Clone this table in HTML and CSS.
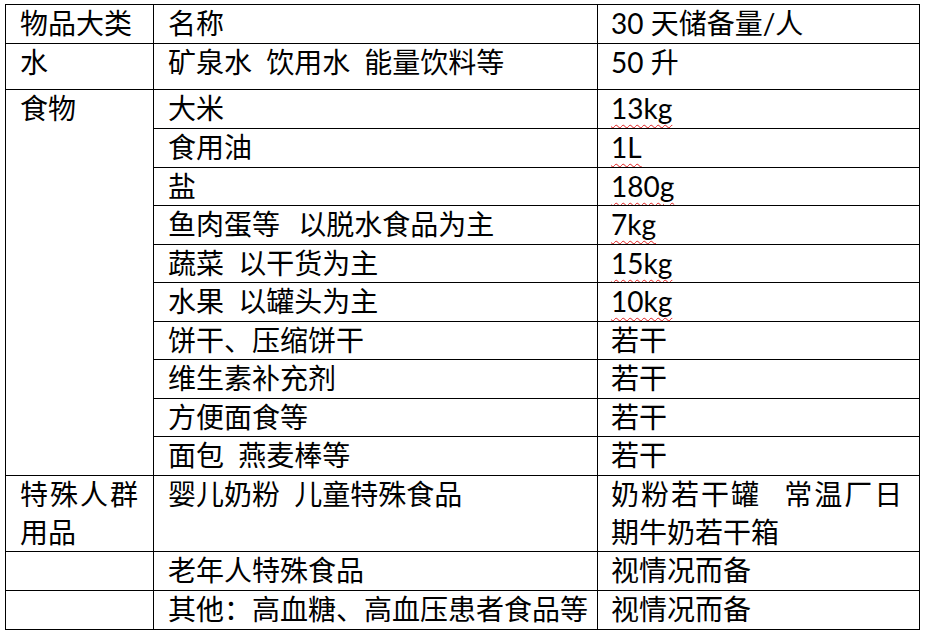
FILE: index.html
```html
<!DOCTYPE html>
<html lang="zh-CN">
<head>
<meta charset="utf-8">
<title>30天储备量</title>
<link rel="stylesheet" href="styles.css">
</head>
<body>
<div class="page">
<table class="grid">
  <colgroup>
    <col class="c1">
    <col class="c2">
    <col class="c3">
  </colgroup>
  <tr class="h39">
    <td><div class="t">物品大类</div></td>
    <td><div class="t">名称</div></td>
    <td class="num"><div class="t">30 天储备量/人</div></td>
  </tr>
  <tr class="h46">
    <td><div class="t">水</div></td>
    <td><div class="t ws">矿泉水 饮用水 能量饮料等</div></td>
    <td class="num"><div class="t">50 升</div></td>
  </tr>
  <tr class="h39">
    <td rowspan="10"><div class="t">食物</div></td>
    <td><div class="t">大米</div></td>
    <td class="num"><div class="t"><span class="sq">13kg</span></div></td>
  </tr>
  <tr class="hf">
    <td><div class="t">食用油</div></td>
    <td class="num"><div class="t"><span class="sq">1L</span></div></td>
  </tr>
  <tr class="hf">
    <td><div class="t">盐</div></td>
    <td class="num"><div class="t"><span class="sq">180g</span></div></td>
  </tr>
  <tr class="hf">
    <td><div class="t wl">鱼肉蛋等 以脱水食品为主</div></td>
    <td class="num"><div class="t"><span class="sq">7kg</span></div></td>
  </tr>
  <tr class="hf">
    <td><div class="t ws">蔬菜 以干货为主</div></td>
    <td class="num"><div class="t"><span class="sq">15kg</span></div></td>
  </tr>
  <tr class="hf">
    <td><div class="t ws">水果 以罐头为主</div></td>
    <td class="num"><div class="t"><span class="sq">10kg</span></div></td>
  </tr>
  <tr class="hf">
    <td><div class="t">饼干、压缩饼干</div></td>
    <td class="num"><div class="t">若干</div></td>
  </tr>
  <tr class="hf">
    <td><div class="t">维生素补充剂</div></td>
    <td class="num"><div class="t">若干</div></td>
  </tr>
  <tr class="hf">
    <td><div class="t">方便面食等</div></td>
    <td class="num"><div class="t">若干</div></td>
  </tr>
  <tr class="hf">
    <td><div class="t ws">面包 燕麦棒等</div></td>
    <td class="num"><div class="t">若干</div></td>
  </tr>
  <tr class="h76">
    <td><div class="t"><span class="just">特殊人群</span><br>用品</div></td>
    <td><div class="t ws">婴儿奶粉 儿童特殊食品</div></td>
    <td class="num"><div class="t wx"><span class="just">奶粉若干罐 常温厂日</span><br>期牛奶若干箱</div></td>
  </tr>
  <tr class="h39">
    <td></td>
    <td><div class="t">老年人特殊食品</div></td>
    <td class="num"><div class="t">视情况而备</div></td>
  </tr>
  <tr class="h39">
    <td></td>
    <td><div class="t">其他：高血糖、高血压患者食品等</div></td>
    <td class="num"><div class="t">视情况而备</div></td>
  </tr>
</table>
</div>
</body>
</html>
```
FILE: styles.css
```css
html, body {
  margin: 0;
  padding: 0;
  background: #ffffff;
}

.page {
  padding: 4px 0 0 5px;
}

.grid {
  border-collapse: collapse;
  table-layout: fixed;
  width: 914px;
  font-family: "Lato", "Noto Sans CJK SC", sans-serif;
  font-size: 28px;
  color: #000000;
}

.c1 { width: 148px; }
.c2 { width: 444px; }
.c3 { width: 322px; }

.grid td {
  border: 1px solid #000000;
  vertical-align: top;
  padding: 0 6px 0 14px;
  white-space: nowrap;
  overflow: hidden;
}

.grid td.num {
  padding-left: 13px;
}

.t {
  line-height: 38px;
  margin-top: -1px;
}

.ws { word-spacing: 7px; }
.wl { word-spacing: 11px; }
.wx { word-spacing: 14px; }

.just { letter-spacing: 2px; }

.h39 { height: 39px; }
.h46 { height: 46px; }
.hf { height: 38.56px; }
.h76 { height: 76px; }

.sq {
  text-decoration: underline wavy #e02020;
  text-decoration-thickness: 1px;
  text-underline-offset: 5px;
}
```
